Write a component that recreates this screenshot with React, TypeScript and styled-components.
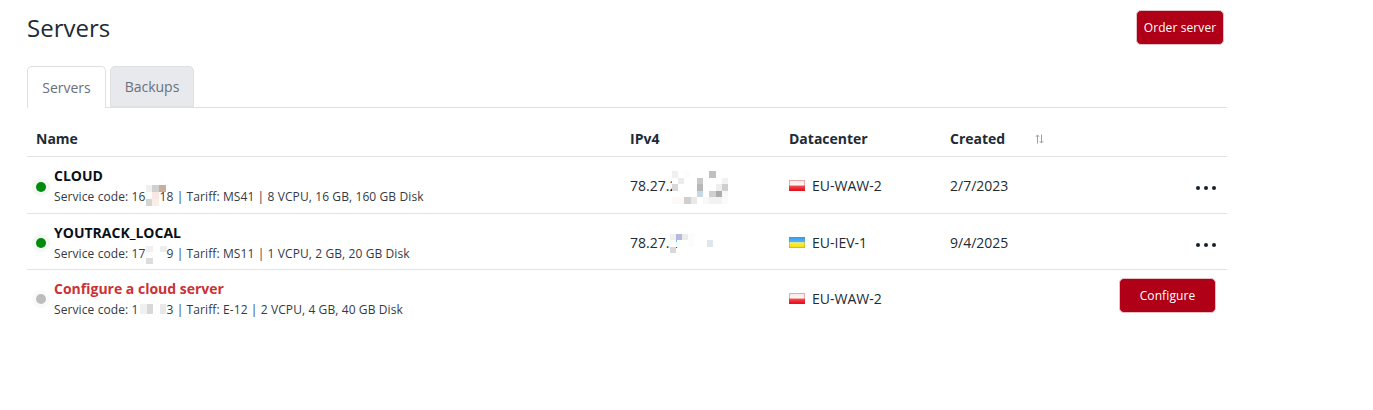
import React from 'react'
import styled, { createGlobalStyle } from 'styled-components'

type Cell = [number, number, number, number, string]

const GlobalStyle = createGlobalStyle`
  html, body {
    margin: 0;
    background: #fff;
    font-family: 'Open Sans', 'Noto Sans', sans-serif;
    color: #212b36;
  }
`

const Page = styled.div`
  width: 1200px;
  padding: 10px 0 0 27px;
`

const Header = styled.div`
  display: flex;
  justify-content: space-between;
  align-items: flex-start;
  padding-right: 3px;
  height: 56px;
`

const Title = styled.h1`
  margin: 0;
  font-size: 24px;
  font-weight: 400;
  line-height: 36px;
`

const RedButton = styled.button<{ $width: number; $shift?: number }>`
  background: #b00017;
  color: #fff;
  border: 1px solid #e3c2c6;
  border-radius: 5px;
  font-family: inherit;
  font-size: 12px;
  letter-spacing: 0.1px;
  height: 35px;
  padding: 0;
  width: ${(p) => p.$width}px;
  margin-bottom: ${(p) => p.$shift ?? 0}px;
`

const Tabs = styled.div`
  display: flex;
  gap: 4px;
  height: 41px;
  border-bottom: 1px solid #dfe0e3;
`

const Tab = styled.div<{ $active?: boolean }>`
  box-sizing: border-box;
  width: ${(p) => (p.$active ? 79 : 84)}px;
  height: ${(p) => (p.$active ? 42 : 41)}px;
  line-height: ${(p) => (p.$active ? 42 : 39)}px;
  text-align: center;
  font-size: 14px;
  color: #68707c;
  background: ${(p) => (p.$active ? '#fff' : '#e8e9ed')};
  border: 1px solid #dfe0e3;
  border-bottom: ${(p) => (p.$active ? 'none' : '1px solid #dfe0e3')};
  border-radius: 5px 5px 0 0;
`

const Table = styled.table`
  width: 1200px;
  table-layout: fixed;
  border-collapse: collapse;
  font-size: 14px;
`

const HeadCell = styled.th<{ $width?: number }>`
  width: ${(p) => (p.$width ? `${p.$width}px` : 'auto')};
  height: 48px;
  padding: 14px 0 0 9px;
  text-align: left;
  font-size: 14px;
  font-weight: 700;
  line-height: 19px;
  box-sizing: border-box;
  border-bottom: 1px solid #e2e3e5;
`

const CreatedHead = styled.div`
  display: flex;
  align-items: center;
  gap: 30px;
`

const Row = styled.tr<{ $height: number }>`
  height: ${(p) => p.$height}px;
  border-bottom: 1px solid #e2e3e5;
  &:last-child {
    border-bottom: none;
  }
`

const Td = styled.td`
  padding: 2px 0 0 9px;
  vertical-align: middle;
`

const ActionTd = styled.td`
  padding: 0 11px 0 0;
  vertical-align: middle;
  text-align: right;
`

const NameWrap = styled.div`
  display: flex;
  align-items: center;
`

const Dot = styled.span<{ $color: string; $halo: string }>`
  flex: none;
  box-sizing: border-box;
  width: 10px;
  height: 10px;
  margin: 2px 8px 0 0;
  border-radius: 50%;
  background: ${(p) => p.$color};
  box-shadow: 0 0 0 4px ${(p) => p.$halo};
`

const NameStack = styled.div`
  display: flex;
  flex-direction: column;
  gap: 3px;
`

const Name = styled.div<{ $link?: boolean }>`
  font-size: 14px;
  font-weight: 700;
  line-height: 19px;
  color: ${(p) => (p.$link ? '#cb3234' : '#0b0f18')};
`

const Meta = styled.div`
  font-size: 12px;
  letter-spacing: 0.1px;
  line-height: 17px;
  color: #333a46;
  white-space: nowrap;
`

const Masked = styled.span<{ $width: number }>`
  display: inline-block;
  position: relative;
  width: ${(p) => p.$width}px;
  height: 1px;
`

const Mosaic = styled.svg<{ $left: number; $top: number }>`
  position: absolute;
  left: ${(p) => p.$left}px;
  top: ${(p) => p.$top}px;
  display: block;
`

const Place = styled.div`
  display: flex;
  align-items: center;
  gap: 7px;
`

const More = styled.div`
  display: inline-flex;
  gap: 4px;
  margin: 10px 0 0;
`

const MoreDot = styled.span`
  width: 4px;
  height: 4px;
  border-radius: 50%;
  background: #17212c;
`

const Blocks: React.FC<{ cells: Cell[]; width: number; height: number; left: number; top: number }> = ({
  cells,
  width,
  height,
  left,
  top,
}) => (
  <Mosaic $left={left} $top={top} width={width} height={height} viewBox={`0 0 ${width} ${height}`} shapeRendering="crispEdges">
    {cells.map(([x, y, w, h, fill], i) => (
      <rect key={i} x={x} y={y} width={w} height={h} fill={fill} />
    ))}
  </Mosaic>
)

const Flag: React.FC<{ id: string; top: string[]; bottom: string[]; edge: string }> = ({ id, top, bottom, edge }) => (
  <svg width="16" height="11" viewBox="0 0 16 11">
    <defs>
      <linearGradient id={`${id}-a`} x1="0" y1="0" x2="0" y2="1">
        <stop offset="0" stopColor={top[0]} />
        <stop offset="1" stopColor={top[1]} />
      </linearGradient>
      <linearGradient id={`${id}-b`} x1="0" y1="0" x2="0" y2="1">
        <stop offset="0" stopColor={bottom[0]} />
        <stop offset="1" stopColor={bottom[1]} />
      </linearGradient>
    </defs>
    <rect width="16" height="5.5" fill={`url(#${id}-a)`} />
    <rect y="5.5" width="16" height="5.5" fill={`url(#${id}-b)`} />
    <rect x="0.5" y="0.5" width="15" height="10" fill="none" stroke={edge} strokeOpacity="0.35" />
  </svg>
)

const Poland: React.FC<{ id: string }> = ({ id }) => (
  <Flag id={id} top={['#f4e4e4', '#fbfbfb']} bottom={['#f5545a', '#e8000f']} edge="#d0333a" />
)

const Ukraine: React.FC = () => (
  <Flag id="ua" top={['#2f9cf4', '#5cb6f7']} bottom={['#fff23c', '#f4dc00']} edge="#8a8f3a" />
)

const SortIcon: React.FC = () => (
  <svg width="9" height="10" viewBox="0 0 9 10" fill="none" stroke="#9a9ea3" strokeWidth="1">
    <path d="M2.5 9.5V1M0.8 2.8L2.5 1L4.2 2.8" />
    <path d="M6.5 0.5V9M4.8 7.2L6.5 9L8.2 7.2" />
  </svg>
)

const Dots: React.FC = () => (
  <More>
    <MoreDot />
    <MoreDot />
    <MoreDot />
  </More>
)

const App: React.FC = () => (
  <>
    <GlobalStyle />
    <Page>
      <Header>
        <Title>Servers</Title>
        <RedButton $width={88}>Order server</RedButton>
      </Header>
      <Tabs>
        <Tab $active>Servers</Tab>
        <Tab>Backups</Tab>
      </Tabs>
      <Table>
        <thead>
          <tr>
            <HeadCell $width={594}>Name</HeadCell>
            <HeadCell $width={159}>IPv4</HeadCell>
            <HeadCell $width={161}>Datacenter</HeadCell>
            <HeadCell $width={120}>
              <CreatedHead>
                Created
                <SortIcon />
              </CreatedHead>
            </HeadCell>
            <HeadCell />
          </tr>
        </thead>
        <tbody>
          <Row $height={57}>
            <Td>
              <NameWrap>
                <Dot $color="#008a0e" $halo="#f3f8f3" />
                <NameStack>
                  <Name>CLOUD</Name>
                  <Meta>
                    Service code: 16
                    <Masked $width={14}>
                      <Blocks
                        left={0}
                        top={-15}
                        width={20}
                        height={21}
                        cells={[
                          [0, 0, 6, 7, '#f0f0f0'],
                          [6, 0, 7, 7, '#d0d0d0'],
                          [13, 0, 7, 7, '#c9ae9f'],
                          [0, 7, 6, 7, '#ffffff'],
                          [6, 7, 7, 7, '#f8e8e4'],
                          [0, 14, 6, 7, '#d4d4d4'],
                          [6, 14, 7, 7, '#fbeee9'],
                        ]}
                      />
                    </Masked>
                    18 | Tariff: MS41 | 8 VCPU, 16 GB, 160 GB Disk
                  </Meta>
                </NameStack>
              </NameWrap>
            </Td>
            <Td>
              78.27.2
              <Masked $width={0}>
                <Blocks
                  left={-5}
                  top={-19}
                  width={56}
                  height={33}
                  cells={[
                    [0, 0, 6, 7, '#f0f0f0'],
                    [12, 0, 6, 7, '#fcfcfc'],
                    [37, 0, 7, 7, '#c0c0c0'],
                    [0, 7, 6, 6, '#ffffff'],
                    [6, 7, 6, 6, '#ececec'],
                    [25, 7, 6, 6, '#c8c8c8'],
                    [50, 7, 6, 6, '#f2f2f2'],
                    [0, 13, 6, 7, '#d8d8d8'],
                    [25, 13, 6, 7, '#b8b8b8'],
                    [44, 13, 6, 7, '#efefef'],
                    [50, 13, 6, 7, '#cfcfcf'],
                    [0, 20, 6, 6, '#ffffff'],
                    [25, 20, 6, 6, '#c4d8e6'],
                    [37, 20, 7, 6, '#d0d0d0'],
                    [44, 20, 6, 6, '#acacac'],
                    [50, 20, 6, 6, '#f8f8f8'],
                    [0, 26, 12, 7, '#fdf9f6'],
                    [12, 26, 7, 7, '#cfcfcf'],
                    [19, 26, 6, 7, '#e8e8e8'],
                    [31, 26, 6, 7, '#f8f8f8'],
                    [37, 26, 13, 7, '#f2f2f2'],
                    [50, 26, 6, 7, '#fafafa'],
                  ]}
                />
              </Masked>
            </Td>
            <Td>
              <Place>
                <Poland id="pl1" />
                EU-WAW-2
              </Place>
            </Td>
            <Td>2/7/2023</Td>
            <ActionTd>
              <Dots />
            </ActionTd>
          </Row>
          <Row $height={56}>
            <Td>
              <NameWrap>
                <Dot $color="#008a0e" $halo="#f3f8f3" />
                <NameStack>
                  <Name>YOUTRACK_LOCAL</Name>
                  <Meta>
                    Service code: 17
                    <Masked $width={21}>
                      <Blocks
                        left={0}
                        top={-11}
                        width={21}
                        height={18}
                        cells={[
                          [0, 0, 7, 6, '#f0f0f0'],
                          [14, 0, 7, 6, '#ededed'],
                          [0, 12, 7, 6, '#dcdcdc'],
                        ]}
                      />
                    </Masked>
                    9 | Tariff: MS11 | 1 VCPU, 2 GB, 20 GB Disk
                  </Meta>
                </NameStack>
              </NameWrap>
            </Td>
            <Td>
              78.27.2
              <Masked $width={0}>
                <Blocks
                  left={-7}
                  top={-13}
                  width={43}
                  height={19}
                  cells={[
                    [0, 0, 6, 6, '#f0f0f0'],
                    [6, 0, 6, 6, '#b8b8dc'],
                    [12, 0, 6, 6, '#ececec'],
                    [18, 0, 6, 13, '#fcfcfc'],
                    [0, 6, 6, 7, '#ffffff'],
                    [37, 6, 6, 7, '#e0e6ec'],
                    [0, 13, 6, 6, '#d8d8d8'],
                  ]}
                />
              </Masked>
            </Td>
            <Td>
              <Place>
                <Ukraine />
                EU-IEV-1
              </Place>
            </Td>
            <Td>9/4/2025</Td>
            <ActionTd>
              <Dots />
            </ActionTd>
          </Row>
          <Row $height={56}>
            <Td>
              <NameWrap>
                <Dot $color="#bdbdbd" $halo="#fafafa" />
                <NameStack>
                  <Name $link>Configure a cloud server</Name>
                  <Meta>
                    Service code: 1
                    <Masked $width={28}>
                      <Blocks
                        left={1}
                        top={-9}
                        width={26}
                        height={10}
                        cells={[
                          [0, 0, 7, 10, '#f0f0f0'],
                          [7, 0, 6, 10, '#d8d8d8'],
                          [20, 0, 6, 10, '#e8e8e8'],
                        ]}
                      />
                    </Masked>
                    3 | Tariff: E-12 | 2 VCPU, 4 GB, 40 GB Disk
                  </Meta>
                </NameStack>
              </NameWrap>
            </Td>
            <Td />
            <Td>
              <Place>
                <Poland id="pl2" />
                EU-WAW-2
              </Place>
            </Td>
            <Td />
            <ActionTd>
              <RedButton $width={97} $shift={3}>Configure</RedButton>
            </ActionTd>
          </Row>
        </tbody>
      </Table>
    </Page>
  </>
)

export default App
